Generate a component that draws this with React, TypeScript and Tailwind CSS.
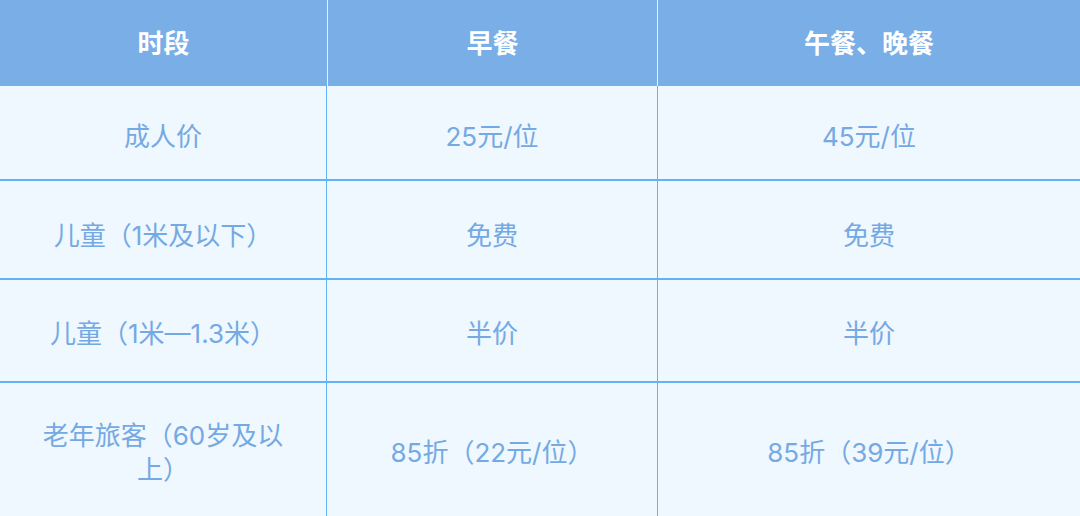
const rows = [
  { label: "成人价", breakfast: "25元/位", dinner: "45元/位", h: "h-[95px]", pt: "pt-[8px]" },
  { label: "儿童（1米及以下）", breakfast: "免费", dinner: "免费", h: "h-[99px]", pt: "pt-[12px]" },
  { label: "儿童（1米—1.3米）", breakfast: "半价", dinner: "半价", h: "h-[103px]", pt: "pt-[6px]" },
  { label: "老年旅客（60岁及以上）", breakfast: "85折（22元/位）", dinner: "85折（39元/位）", h: "h-[140px]", pt: "pt-0" },
];

export default function App() {
  return (
    <div
      className="h-[516px] w-[1080px] overflow-hidden bg-[#eff7ff]"
      style={{ fontFamily: '"Inter", "Noto Sans CJK SC", sans-serif' }}
    >
      {/* Header */}
      <div className="grid h-[86px] grid-cols-[327px_330px_1fr] bg-[#79aee6] text-[26px] font-bold text-white">
        <div className="flex items-center justify-center">时段</div>
        <div className="flex items-center justify-center border-l border-[#e4f0fc]">早餐</div>
        <div className="flex items-center justify-center border-l border-[#e4f0fc]">午餐、晚餐</div>
      </div>

      {/* Body */}
      {rows.map((r, i) => (
        <div
          key={i}
          className={`grid grid-cols-[326px_331px_1fr] text-[26px] leading-[34px] text-[#74a9e3] ${
            i < rows.length - 1 ? "border-b-2 border-[#62b2f7]" : ""
          } ${r.h}`}
        >
          <div className={`flex items-center justify-center px-[34px] text-center ${r.pt}`}>{r.label}</div>
          <div className={`flex items-center justify-center border-l border-[#62b2f7] ${r.pt}`}>{r.breakfast}</div>
          <div className={`flex items-center justify-center border-l border-[#62b2f7] ${r.pt}`}>{r.dinner}</div>
        </div>
      ))}
    </div>
  );
}
